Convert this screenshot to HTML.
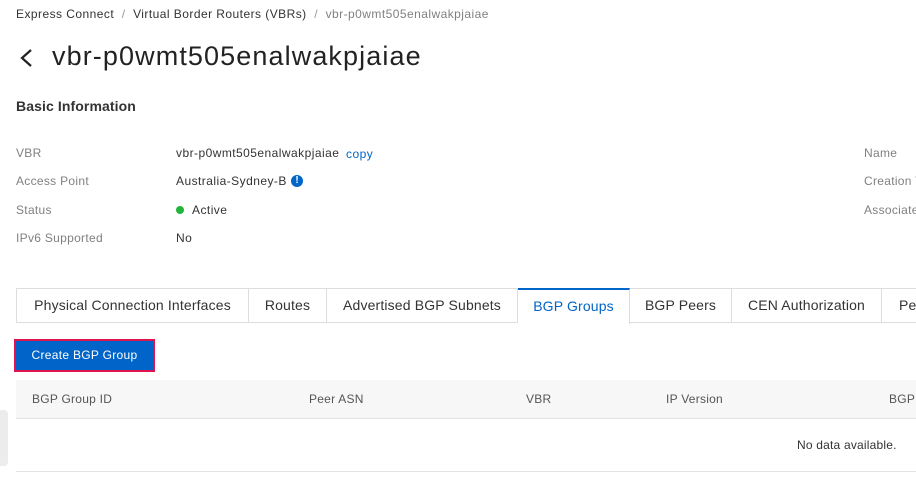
<!DOCTYPE html>
<html><head><style>
body{margin:0;width:916px;height:478px;overflow:hidden;background:#fff;font-family:"Liberation Sans",sans-serif;color:#333;position:relative}
.a{position:absolute;white-space:nowrap}
.lbl{color:#808080;font-size:12px;letter-spacing:0.3px}
.val{color:#333;font-size:12px;letter-spacing:0.45px}
.th{color:#555;font-size:12px;letter-spacing:0.25px}
.tabs{position:absolute;left:16px;top:288px;height:35px;width:910px;border:1px solid #ddd;border-right:none;box-sizing:border-box}
.tab{position:absolute;top:-1px;height:35px;border-right:1px solid #ddd;box-sizing:border-box;font-size:14px;color:#333;line-height:35px;text-align:center;letter-spacing:0.15px}
</style></head><body>
<div class="a" style="left:16px;top:7px;font-size:12px;color:#333;letter-spacing:0.45px">Express Connect&nbsp;&nbsp;<span style="color:#999">/</span>&nbsp;&nbsp;Virtual Border Routers (VBRs)&nbsp;&nbsp;<span style="color:#999">/</span>&nbsp;&nbsp;<span style="color:#808080">vbr-p0wmt505enalwakpjaiae</span></div>
<svg class="a" style="left:18px;top:48px" width="16" height="20"><path d="M13 2 L4 10 L13 18" fill="none" stroke="#222" stroke-width="2.2"/></svg>
<div class="a" style="left:52px;top:41px;font-size:27px;color:#222;letter-spacing:1.1px">vbr-p0wmt505enalwakpjaiae</div>
<div class="a" style="left:16px;top:98px;font-size:14px;font-weight:bold;color:#333;letter-spacing:0.1px">Basic Information</div>
<div class="a lbl" style="left:16px;top:146px">VBR</div>
<div class="a lbl" style="left:16px;top:174px">Access Point</div>
<div class="a lbl" style="left:16px;top:203px">Status</div>
<div class="a lbl" style="left:16px;top:231px">IPv6 Supported</div>
<div class="a val" style="left:176px;top:146px">vbr-p0wmt505enalwakpjaiae</div>
<div class="a val" style="left:346px;top:147px;color:#0064c8">copy</div>
<div class="a val" style="left:176px;top:174px">Australia-Sydney-B</div>
<div class="a" style="left:291px;top:175px;width:12px;height:12px;border-radius:6px;background:#0064c8;color:#fff;font-size:10px;font-weight:bold;text-align:center;line-height:12px">!</div>
<div class="a" style="left:176px;top:206px;width:8px;height:8px;border-radius:4px;background:#23b43b"></div>
<div class="a val" style="left:192px;top:203px">Active</div>
<div class="a val" style="left:176px;top:231px">No</div>
<div class="a lbl" style="left:864px;top:146px">Name</div>
<div class="a lbl" style="left:864px;top:174px">Creation T</div>
<div class="a lbl" style="left:864px;top:203px">Associated</div>
<div class="tabs">
<div class="tab" style="left:0;width:232px">Physical Connection Interfaces</div>
<div class="tab" style="left:232px;width:78px">Routes</div>
<div class="tab" style="left:310px;width:191px">Advertised BGP Subnets</div>
<div class="tab" style="left:501px;width:112px;color:#0064c8;border-top:2px solid #0064c8;line-height:33px;height:36px;background:#fff;border-left:none">BGP Groups</div>
<div class="tab" style="left:613px;width:102px">BGP Peers</div>
<div class="tab" style="left:715px;width:150px">CEN Authorization</div>
<div class="tab" style="left:865px;width:60px;text-align:left;padding-left:17px">Peer</div>
</div>
<div class="a" style="left:14px;top:339px;width:141px;height:33px;box-sizing:border-box;border:2px solid #e0134f;background:#0064c8;color:#fff;font-size:12px;text-align:center;line-height:29px;letter-spacing:0.3px">Create BGP Group</div>
<div class="a" style="left:16px;top:380px;width:900px;height:38px;background:#f7f7f7;border-bottom:1px solid #e3e3e3"></div>
<div class="a th" style="left:32px;top:392px">BGP Group ID</div>
<div class="a th" style="left:309px;top:392px">Peer ASN</div>
<div class="a th" style="left:526px;top:392px">VBR</div>
<div class="a th" style="left:666px;top:392px">IP Version</div>
<div class="a th" style="left:889px;top:392px">BGP</div>
<div class="a val" style="left:797px;top:438px;letter-spacing:0.2px">No data available.</div>
<div class="a" style="left:16px;top:471px;width:900px;height:1px;background:#e3e3e3"></div>
<div class="a" style="left:0;top:410px;width:8px;height:56px;background:#ececec;border-radius:0 4px 4px 0"></div>
</body></html>
